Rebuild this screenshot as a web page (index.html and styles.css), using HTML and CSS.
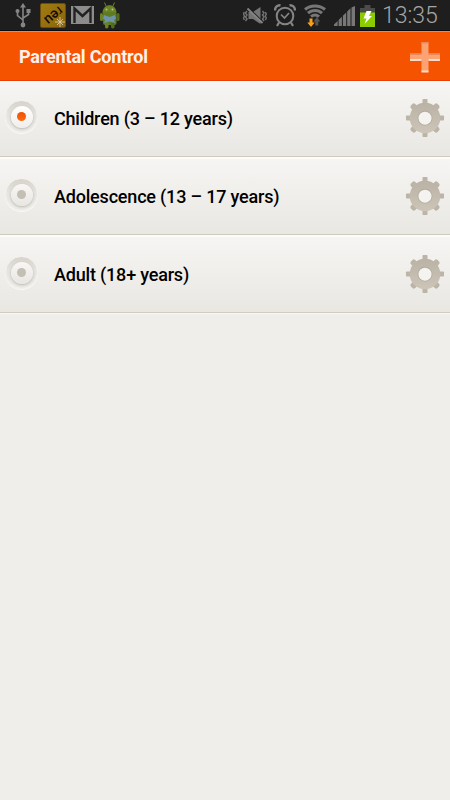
FILE: index.html
```html
<!DOCTYPE html>
<html lang="en">
<head>
    <meta charset="UTF-8">
    <meta name="viewport" content="width=device-width, initial-scale=1.0">
    <title>Parental Control</title>
    <link rel="stylesheet" href="styles.css">
</head>
<body>
    <!-- shared shapes -->
    <svg class="defs" width="0" height="0">
        <defs>
            <linearGradient id="gearFill" x1="0" y1="0" x2="0" y2="1">
                <stop offset="0" stop-color="#b9b2a5"/>
                <stop offset="1" stop-color="#cdc6b8"/>
            </linearGradient>
            <symbol id="gear" viewBox="0 0 40 42">
                <g fill="#bbb4a7">
                    <rect x="17.5" y="1" width="5" height="38" rx="0.8"/>
                    <rect x="1" y="17.5" width="38" height="5" rx="0.8"/>
                    <rect x="17" y="1.2" width="6" height="37.6" rx="2" transform="rotate(45 20 20)"/>
                    <rect x="17" y="1.2" width="6" height="37.6" rx="2" transform="rotate(-45 20 20)"/>
                </g>
                <circle cx="20" cy="20" r="15.3" fill="url(#gearFill)"/>
                <circle cx="20" cy="20" r="7.5" fill="#b3ac9f"/>
                <circle cx="20" cy="20.2" r="6.5" fill="#f4f3f0"/>
            </symbol>
        </defs>
    </svg>

    <div class="status-bar">
        <svg class="icon-usb" width="16" height="26" viewBox="0 0 16 26" fill="none" stroke="#858585" stroke-width="1.6">
            <path d="M8 3v20M2.5 9v4.5L8 18M13.5 9v3.5L8 16"/>
            <path d="M8 1l3 4.5H5z" fill="#858585" stroke="none"/>
            <circle cx="8" cy="23" r="2.4" fill="#858585" stroke="none"/>
            <circle cx="2.5" cy="9" r="2" fill="#858585" stroke="none"/>
            <path d="M11.5 7h4v4h-4z" fill="#858585" stroke="none"/>
        </svg>
        <div class="icon-app">
            <span>nəɹ</span>
            <svg width="10" height="10" viewBox="0 0 10 10" stroke="#d9c9a0" stroke-width="0.9"><path d="M5 0v10M0 5h10M2 2l6 6M8 2l-6 6"/></svg>
        </div>
        <svg class="icon-mail" width="23" height="18" viewBox="0 0 23 18">
            <rect width="23" height="18" fill="#8c8c8c"/>
            <path d="M3.5 17V2.5L11.5 10l8-7.5V17" fill="none" stroke="#222" stroke-width="2.4"/>
        </svg>
        <svg class="icon-android" width="20" height="27" viewBox="0 0 20 27">
            <path d="M6 4L4.5 .5M13 4l1.5-3.5" stroke="#6a8424" stroke-width="1"/>
            <path d="M2.5 11C2.5 .5 16.5 .5 16.5 11z" fill="#6a8424"/>
            <rect x="3" y="10" width="13.5" height="13" rx="2" fill="#5f7b22"/>
            <rect x="0" y="11" width="3" height="8" rx="1.5" fill="#6a8424"/>
            <rect x="16.5" y="11" width="3" height="8" rx="1.5" fill="#526c1f"/>
            <rect x="5" y="20" width="3.5" height="6.5" rx="1.7" fill="#6a8424"/>
            <rect x="11" y="20" width="3.5" height="6.5" rx="1.7" fill="#526c1f"/>
            <circle cx="6.5" cy="7.5" r="1" fill="#b5bd9a"/>
            <circle cx="12.5" cy="7.5" r="1" fill="#b5bd9a"/>
            <path d="M4 13l5.5 2L15 13l1 3.5-2 1.5 1 3-5.5-1.500L4 21l1-3-2-1.500z" fill="#6d93ad"/>
        </svg>
        <div class="spacer"></div>
        <svg class="icon-mute" width="24" height="20" viewBox="0 0 24 20">
            <path d="M5.5 6H10l7.500-5v17L10 13H5.500z" fill="#747474"/>
            <path d="M5.5 2L20.5 16.500" stroke="#1e1e1e" stroke-width="1.500"/>
            <path d="M4.500 2.500L19.500 17" stroke="#858585" stroke-width="1.800"/>
            <path d="M4 5L2.500 7 4 9l-1.500 2L4 13l-1.500 2M1.300 6L.5 8l1 2-1 2 .8 2M19.500 5L21 7l-1.500 2 1.500 2-1.500 2 1.500 2M22.300 6l1 2-1 2 1 2-1 2" fill="none" stroke="#747474" stroke-width="1.400"/>
        </svg>
        <svg class="icon-alarm" width="22" height="23" viewBox="0 0 22 23" fill="none" stroke="#858585">
            <circle cx="11" cy="12" r="8.300" stroke-width="2"/>
            <path d="M7 10.500l3.500 3.500L15 9" stroke-width="1.700"/>
            <path d="M1 6.500C1 3 3.500 1 6.500 1.300M21 6.500C21 3 18.500 1 15.500 1.300" stroke-width="2.400"/>
            <path d="M5 18.500L3 22M17 18.500l2 3.500" stroke-width="2.200"/>
        </svg>
        <svg class="icon-wifi" width="22" height="23" viewBox="0 0 22 23" fill="none" stroke="#777" stroke-width="3">
            <path d="M1 5.500C6.500 .800 15.500 .800 21 5.500M4 9.200c4-3.700 10-3.700 14 0M7 12.700c2.500-2.200 5.500-2.200 8 0"/>
            <path d="M5.500 14.500h3v4h2.200L7 23l-3.700-4.500h2.200z" fill="#f9a01b" stroke="none"/>
            <path d="M11.300 21.500v-4H9.500L12.800 13l3.500 4.500h-2v4z" fill="#555" stroke="none"/>
        </svg>
        <svg class="icon-signal" width="21" height="20" viewBox="0 0 21 20" fill="#777">
            <path d="M0 20v-1.500L3.600 15v5zM4.600 20v-6L7.900 10.700V20zM8.900 20V9.700L12.200 6.400V20zM13.200 20V5.500l3.300-3.300V20zM17.500 20V1.500L21 0v20z"/>
        </svg>
        <svg class="icon-battery" width="15" height="22" viewBox="0 0 15 22">
            <path d="M4.500 0h6v3H15v6H0V3h4.500z" fill="#4b4b4b"/>
            <rect y="7.500" width="15" height="14.500" fill="#8ccb00"/>
            <path d="M6.500 6h5L9 11h3l-7.500 8L6.500 13.500H3.500z" fill="#fff"/>
        </svg>
        <span class="clock">13:35</span>
    </div>

    <div class="header">
        <h1>Parental Control</h1>
        <svg class="icon-plus" width="30" height="31" viewBox="0 0 30 31">
            <path d="M11.500 0h7v11.500H30v6.500H18.500v12h-7V18H0v-6.500h11.500z" fill="#fca273"/>
            <path d="M11.500 0h7v1.500h-7zM0 11.500h11.500V13H0zM18.500 11.500H30V13H18.500z" fill="#e58a5c"/>
            <path d="M0 17h11.500v2H0zM18.500 17H30v2H18.500zM11.500 28.500h7v2h-7z" fill="#ffd9c7"/>
        </svg>
    </div>

    <div class="list">
        <div class="row first">
            <span class="radio selected"><span class="knob"><span class="dot"></span></span></span>
            <span class="label">Children (3 – 12 years)</span>
            <svg class="gear" width="40" height="42"><use href="#gear"/></svg>
        </div>
        <div class="row">
            <span class="radio"><span class="knob"><span class="dot"></span></span></span>
            <span class="label">Adolescence (13 – 17 years)</span>
            <svg class="gear" width="40" height="42"><use href="#gear"/></svg>
        </div>
        <div class="row">
            <span class="radio"><span class="knob"><span class="dot"></span></span></span>
            <span class="label">Adult (18+ years)</span>
            <svg class="gear" width="40" height="42"><use href="#gear"/></svg>
        </div>
    </div>
</body>
</html>
```
FILE: styles.css
```css
* {
    box-sizing: border-box;
}

body {
    margin: 0;
    height: 100vh;
    background-color: #efeeea;
    font-family: Roboto, "Liberation Sans", sans-serif;
    overflow: hidden;
}

svg {
    display: block;
    flex: none;
}

.defs {
    position: absolute;
}

/* Status bar */
.status-bar {
    display: flex;
    align-items: flex-start;
    height: 31px;
    padding: 2px 0 0 15px;
    background-color: #1e1e1e;
    border-bottom: 1px solid #080a12;
}

.icon-usb {
    margin-right: 9px;
}

.icon-app {
    position: relative;
    width: 26px;
    height: 25px;
    margin: 1px 5px 0 0;
    border: 1px solid #6b4d10;
    border-radius: 2px;
    background: linear-gradient(135deg, #a07b10, #8c650e);
}

.icon-app span {
    display: block;
    width: 23px;
    font-size: 14px;
    font-weight: 500;
    line-height: 20px;
    text-align: center;
    color: #120d02;
    transform: rotate(-40deg);
}

.icon-app svg {
    position: absolute;
    right: 0;
    bottom: 0;
}

.icon-mail {
    margin: 4px 6px 0 0;
}

.spacer {
    flex: 1;
}

.icon-mute {
    margin: 4px 7px 0 0;
}

.icon-alarm {
    margin: 2px 8px 0 0;
}

.icon-wifi {
    margin: 2px 8px 0 0;
}

.icon-signal {
    margin: 4px 5px 0 0;
}

.icon-battery {
    margin: 3px 6px 0 0;
}

.clock {
    width: 69px;
    margin-top: 1px;
    padding-left: 1px;
    font-size: 23px;
    font-weight: 300;
    line-height: 26px;
    color: #a6a6a6;
}

/* Title bar */
.header {
    display: flex;
    align-items: flex-start;
    justify-content: space-between;
    height: 50px;
    padding: 10px 10px 0 19px;
    background-color: #f65301;
    border-top: 1px solid #fb8146;
    border-bottom: 1px solid #ee3d00;
}

.header h1 {
    margin: 5px 0 0;
    font-size: 18px;
    font-weight: 700;
    line-height: 20px;
    letter-spacing: -0.18px;
    color: #fff2ec;
}

/* Profiles */
.row {
    display: flex;
    align-items: flex-start;
    height: 78px;
    padding: 19px 5px 0 5px;
    background: linear-gradient(#f6f5f3, #e9e7e2);
    border-top: 2px solid #fcfcfb;
    border-bottom: 1px solid #d1cabe;
}

.row.first {
    height: 76px;
    padding-top: 17px;
}

.row:last-child {
    box-shadow: 0 1px 0 #f8f8f6;
}

.radio {
    display: flex;
    align-items: center;
    justify-content: center;
    flex: none;
    width: 33px;
    height: 33px;
    margin-right: 16px;
    border: 1px solid #f3f2f0;
    border-radius: 50%;
    background: linear-gradient(#d6d3cc, #e7e5e0 45%, #eeedea);
    box-shadow: 0 1px 0 #f8f8f6;
}

.knob {
    display: flex;
    align-items: center;
    justify-content: center;
    width: 22px;
    height: 22px;
    border-radius: 50%;
    background: linear-gradient(#f8f7f5, #e8e6e1);
    box-shadow: 0 1px 3px #b7b3ab;
}

.dot {
    width: 9px;
    height: 9px;
    border-radius: 50%;
    background-color: #c4bfb3;
}

.selected .knob {
    background: linear-gradient(#fff, #efeeea);
}

.selected .dot {
    background: linear-gradient(#ed5200, #ff6a13);
}

.label {
    flex: 1;
    margin-top: 7px;
    font-size: 18px;
    font-weight: 500;
    line-height: 23px;
    letter-spacing: -0.19px;
    color: #000;
}

.gear {
    margin-top: -2px;
}
```
